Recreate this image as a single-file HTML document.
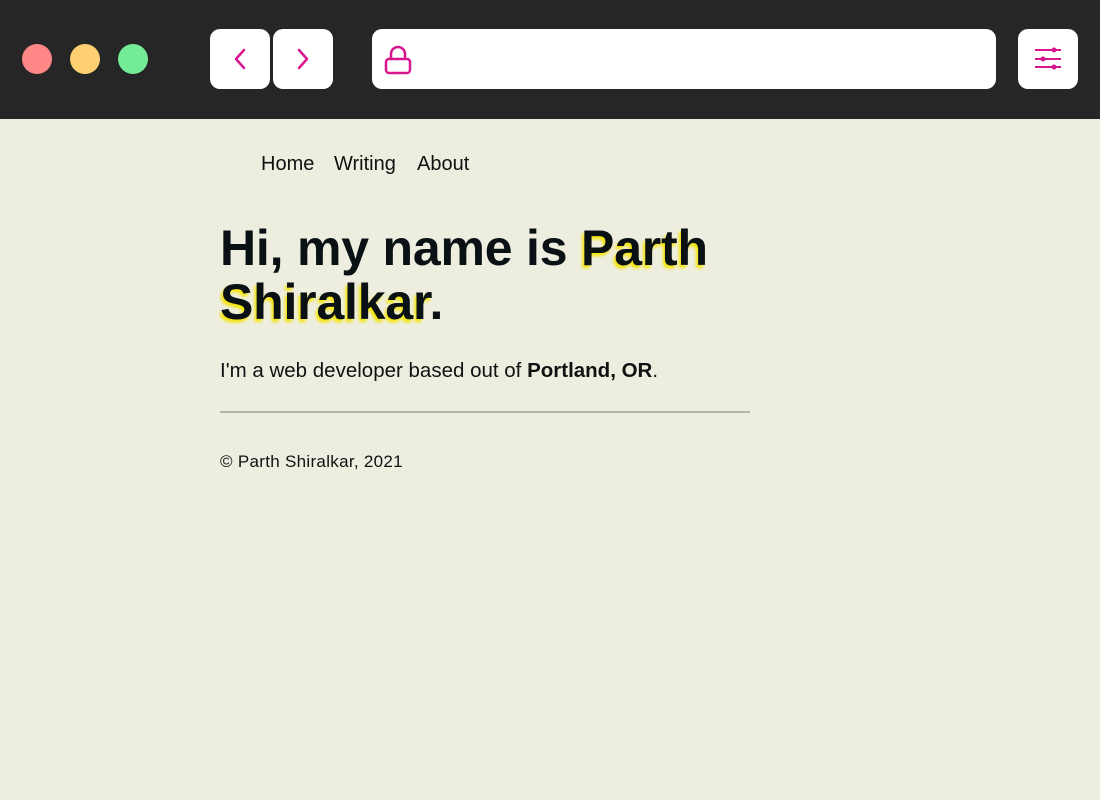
<!DOCTYPE html>
<html><head><meta charset="utf-8"><style>
*{margin:0;padding:0;box-sizing:border-box}
body{width:1100px;height:800px;background:#eeeee0;font-family:"Liberation Sans",sans-serif;overflow:hidden;position:relative}
.bar{position:absolute;left:0;top:0;width:1100px;height:119px;background:#262626}
.dot{position:absolute;top:44px;width:30px;height:30px;border-radius:50%}
.btn{position:absolute;top:29px;width:60px;height:60px;background:#fff;border-radius:10px}
.btn svg{position:absolute;left:0;top:0}
nav{position:absolute;top:153px;left:261px;font-size:20px;color:#111;white-space:nowrap}
nav span{position:absolute;top:0}
h1{position:absolute;left:220px;top:221px;font-size:50px;line-height:54px;color:#0a1114;font-weight:bold;letter-spacing:-0.2px;width:600px}
h1 .hl{text-shadow:-2px 3px 3px #f5e400}
p.i{position:absolute;left:220px;top:359px;font-size:20.5px;color:#111}
hr{position:absolute;left:220px;top:411px;width:530px;border:none;border-top:2px solid #b5b5b0}
.f{position:absolute;left:220px;top:452px;font-size:17px;color:#111;letter-spacing:0.3px}
</style></head><body>
<div class="bar">
<div class="dot" style="left:22px;background:#ff8785"></div>
<div class="dot" style="left:70px;background:#ffd072"></div>
<div class="dot" style="left:118px;background:#74ec97"></div>
<div class="btn" style="left:210px"><svg width="60" height="60"><path d="M36 21 L28 30 L36 39" fill="none" stroke="#d6168c" stroke-width="2.5" stroke-linecap="round" stroke-linejoin="round" transform="translate(-2 0)"/></svg></div>
<div class="btn" style="left:273px"><svg width="60" height="60"><path d="M26 21 L34 30 L26 39" fill="none" stroke="#d6168c" stroke-width="2.5" stroke-linecap="round" stroke-linejoin="round"/></svg></div>
<div class="btn" style="left:372px;width:624px"><svg width="60" height="60"><rect x="14" y="30" width="24" height="14" rx="3" fill="none" stroke="#d6168c" stroke-width="2.5"/><path d="M19 30 V25 a7 7 0 0 1 14 0 V30" fill="none" stroke="#d6168c" stroke-width="2.5"/></svg></div>
<div class="btn" style="left:1018px"><svg width="60" height="60"><g stroke="#d6168c" stroke-width="2"><line x1="17" y1="21" x2="43" y2="21"/><line x1="17" y1="30" x2="43" y2="30"/><line x1="17" y1="38" x2="43" y2="38"/></g><g fill="#d6168c"><circle cx="36" cy="21" r="2.5"/><circle cx="25" cy="30" r="2.5"/><circle cx="36" cy="38" r="2.5"/></g></svg></div>
</div>
<nav><span style="left:0">Home</span><span style="left:73px">Writing</span><span style="left:156px">About</span></nav>
<h1>Hi, my name is <span class="hl">Parth Shiralkar</span>.</h1>
<p class="i">I'm a web developer based out of <b>Portland, OR</b>.</p>
<hr>
<div class="f">© Parth Shiralkar, 2021</div>
</body></html>
